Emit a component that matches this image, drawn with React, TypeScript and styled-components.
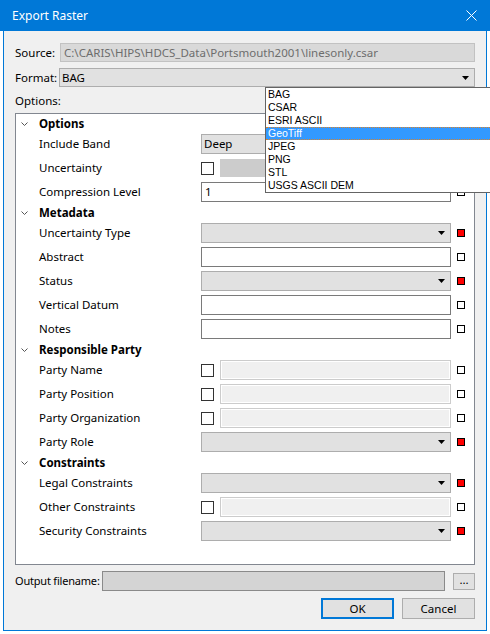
import React from "react";
import styled, { createGlobalStyle } from "styled-components";

const GlobalStyle = createGlobalStyle`
    html, body {
        margin: 0;
        padding: 0;
        background: #ffffff;
        overflow: hidden;
    }
    body {
        font-family: "Segoe UI", "Noto Sans", "Liberation Sans", sans-serif;
        font-size: 11.5px;
        color: #000;
    }
`

const Window = styled.div`
    width: 490px;
    height: 634px;
    display: flex;
    flex-direction: column;
`

const TitleBar = styled.div`
    height: 31px;
    background: #0078d7;
    display: flex;
    align-items: center;
    justify-content: space-between;
    padding: 0 13px 0 12px;
    box-sizing: border-box;
    flex-shrink: 0;
`

const TitleText = styled.span`
    color: #fff;
    font-size: 12px;
`

const CloseBtn = styled.div`
    width: 12px;
    height: 12px;
    display: flex;
    align-items: center;
    justify-content: center;
`

const Body = styled.div`
    margin: 0 3px;
    width: 484px;
    height: 600px;
    box-sizing: border-box;
    background: #f0f0f0;
    border: 1px solid #0078d7;
    border-top: none;
    padding: 12px 11px 11px 11px;
    display: flex;
    flex-direction: column;
`

const FormRow = styled.div<{ $gap?: number }>`
    display: flex;
    align-items: center;
    height: 19px;
    margin-bottom: ${p => p.$gap ?? 0}px;
`

const FormLabel = styled.span`
    width: 45px;
    flex-shrink: 0;
    line-height: 16px;
`

const SourceInput = styled.div`
    flex: 1;
    height: 19px;
    box-sizing: border-box;
    background: #d9d9d9;
    border: 1px solid #c2c2c2;
    color: #6d6d6d;
    padding-left: 3px;
    line-height: 17px;
    white-space: nowrap;
    overflow: hidden;
`

const ComboWrap = styled.div`
    position: relative;
    flex: 1;
    height: 19px;
    margin-left: -1px;
`

const Combo = styled.div<{ $height?: number }>`
    width: 100%;
    height: ${p => p.$height ?? 20}px;
    box-sizing: border-box;
    background: #e1e1e1;
    border: 1px solid #adadad;
    display: flex;
    align-items: center;
    justify-content: space-between;
    padding: 0 5px 0 2px;
    line-height: 16px;
`

const Arrow = () => (
    <svg width="7" height="4" viewBox="0 0 7 4">
        <polygon points="0,0 7,0 3.5,4" fill="#000" />
    </svg>
)

const DropList = styled.div`
    position: absolute;
    top: 100%;
    left: 206px;
    width: 232px;
    box-sizing: border-box;
    background: #fff;
    border: 1px solid #646464;
    font-family: "Liberation Sans", Arial, sans-serif;
    font-size: 10.5px;
    z-index: 10;
`

const DropItem = styled.div<{ $active?: boolean }>`
    height: 13px;
    box-sizing: border-box;
    padding-left: 2px;
    background: ${p => (p.$active ? "#3399ff" : "#fff")};
    color: ${p => (p.$active ? "#fff" : "#000")};
    border-top: 1px dotted ${p => (p.$active ? "#d9822b" : "transparent")};
    border-bottom: 1px dotted ${p => (p.$active ? "#d9822b" : "transparent")};
    line-height: 11px;
`

const OptionsLabel = styled.div`
    margin-top: 6px;
    line-height: 16px;
    height: 16px;
`

const Tree = styled.div`
    margin-top: 4px;
    height: 452px;
    box-sizing: border-box;
    background: #fff;
    border: 1px solid #828790;
    padding-top: 1px;
    display: flex;
    flex-direction: column;
    flex-shrink: 0;
`

const HeaderRow = styled.div`
    height: 17px;
    display: flex;
    align-items: center;
    padding-left: 5px;
`

const Chevron = styled.div`
    width: 18px;
    display: flex;
    align-items: center;
`

const HeaderText = styled.span`
    font-weight: 700;
    line-height: 16px;
`

const FieldRow = styled.div`
    height: 24px;
    display: flex;
    align-items: center;
    padding-left: 23px;
`

const FieldLabel = styled.span`
    width: 162px;
    flex-shrink: 0;
    line-height: 16px;
    white-space: nowrap;
`

const Widget = styled.div`
    width: 250px;
    display: flex;
    align-items: center;
    flex-shrink: 0;
`

const TextInput = styled.div`
    width: 100%;
    height: 20px;
    box-sizing: border-box;
    background: #fff;
    color: #000;
    border: 1px solid #7a7a7a;
    padding-left: 3px;
    line-height: 18px;
`

const CheckBox = styled.div`
    width: 13px;
    height: 13px;
    box-sizing: border-box;
    border: 1px solid #333;
    background: #fff;
    flex-shrink: 0;
    margin-right: 6px;
`

const DisabledInput = styled.div`
    flex: 1;
    height: 20px;
    box-sizing: border-box;
    background: #f0f0f0;
    border: 1px solid #cccccc;
    box-shadow: inset 0 0 0 1px #fff;
`

const GrayBox = styled.div`
    flex: 1;
    height: 18px;
    background: #cccccc;
`

const Marker = styled.div<{ $required?: boolean }>`
    width: 8px;
    height: 8px;
    box-sizing: border-box;
    margin-left: 6px;
    border: 1px solid #000;
    background: ${p => (p.$required ? "#ff0000" : "#fff")};
`

const OutputRow = styled.div`
    margin-top: 6px;
    height: 20px;
    display: flex;
    align-items: center;
`

const OutputLabel = styled.span`
    width: 87px;
    flex-shrink: 0;
    font-size: 11px;
    letter-spacing: -0.2px;
    line-height: 16px;
    white-space: nowrap;
`

const OutputInput = styled.div`
    flex: 1;
    height: 20px;
    box-sizing: border-box;
    background: #d4d4d4;
    border: 1px solid #8a8a8a;
`

const BrowseButton = styled.div`
    margin-left: 8px;
    width: 22px;
    height: 17px;
    box-sizing: border-box;
    background: #e1e1e1;
    border: 1px solid #adadad;
    display: flex;
    align-items: center;
    justify-content: center;
    line-height: 12px;
    padding-bottom: 2px;
    flex-shrink: 0;
`

const ButtonRow = styled.div`
    margin-top: 7px;
    display: flex;
    justify-content: flex-end;
    gap: 8px;
`

const Button = styled.div<{ $default?: boolean }>`
    width: 73px;
    height: 21px;
    box-sizing: border-box;
    background: #e1e1e1;
    border: ${p => (p.$default ? "2px solid #0078d7" : "1px solid #adadad")};
    display: flex;
    align-items: center;
    justify-content: center;
    line-height: 16px;
`

type Field = {
    label: string;
    kind: "combo" | "input" | "check" | "checkgray";
    value?: string;
    required?: boolean;
};

type Group = { title: string; fields: Field[] };

const groups: Group[] = [
    {
        title: "Options",
        fields: [
            { label: "Include Band", kind: "combo", value: "Deep", required: true },
            { label: "Uncertainty", kind: "checkgray", required: true },
            { label: "Compression Level", kind: "input", value: "1" },
        ],
    },
    {
        title: "Metadata",
        fields: [
            { label: "Uncertainty Type", kind: "combo", required: true },
            { label: "Abstract", kind: "input" },
            { label: "Status", kind: "combo", required: true },
            { label: "Vertical Datum", kind: "input" },
            { label: "Notes", kind: "input" },
        ],
    },
    {
        title: "Responsible Party",
        fields: [
            { label: "Party Name", kind: "check" },
            { label: "Party Position", kind: "check" },
            { label: "Party Organization", kind: "check" },
            { label: "Party Role", kind: "combo", required: true },
        ],
    },
    {
        title: "Constraints",
        fields: [
            { label: "Legal Constraints", kind: "combo", required: true },
            { label: "Other Constraints", kind: "check" },
            { label: "Security Constraints", kind: "combo", required: true },
        ],
    },
];

const formats = ["BAG", "CSAR", "ESRI ASCII", "GeoTiff", "JPEG", "PNG", "STL", "USGS ASCII DEM"];

const renderWidget = (f: Field) => {
    switch (f.kind) {
        case "combo":
            return (
                <Combo>
                    <span>{f.value ?? ""}</span>
                    <Arrow />
                </Combo>
            );
        case "input":
            return <TextInput>{f.value ?? ""}</TextInput>;
        case "check":
            return (
                <>
                    <CheckBox />
                    <DisabledInput />
                </>
            );
        case "checkgray":
            return (
                <>
                    <CheckBox />
                    <GrayBox />
                </>
            );
    }
};

export default function App() {
    return (
        <>
            <GlobalStyle />
            <Window>
                <TitleBar>
                    <TitleText>Export Raster</TitleText>
                    <CloseBtn>
                        <svg width="11" height="11" viewBox="0 0 11 11">
                            <path d="M0.5 0.5 L10.5 10.5 M10.5 0.5 L0.5 10.5" stroke="#fff" strokeWidth="1" />
                        </svg>
                    </CloseBtn>
                </TitleBar>
                <Body>
                    <FormRow $gap={6}>
                        <FormLabel>Source:</FormLabel>
                        <SourceInput>C:\CARIS\HIPS\HDCS_Data\Portsmouth2001\linesonly.csar</SourceInput>
                    </FormRow>
                    <FormRow>
                        <FormLabel>Format:</FormLabel>
                        <ComboWrap>
                            <Combo $height={19}>
                                <span>BAG</span>
                                <Arrow />
                            </Combo>
                            <DropList>
                                {formats.map(f => (
                                    <DropItem key={f} $active={f === "GeoTiff"}>
                                        {f}
                                    </DropItem>
                                ))}
                            </DropList>
                        </ComboWrap>
                    </FormRow>
                    <OptionsLabel>Options:</OptionsLabel>
                    <Tree>
                        {groups.map(g => (
                            <React.Fragment key={g.title}>
                                <HeaderRow>
                                    <Chevron>
                                        <svg width="7" height="4" viewBox="0 0 7 4">
                                            <polyline points="0.5,0.5 3.5,3.5 6.5,0.5" fill="none" stroke="#555" strokeWidth="1" />
                                        </svg>
                                    </Chevron>
                                    <HeaderText>{g.title}</HeaderText>
                                </HeaderRow>
                                {g.fields.map(f => (
                                    <FieldRow key={f.label}>
                                        <FieldLabel>{f.label}</FieldLabel>
                                        <Widget>{renderWidget(f)}</Widget>
                                        <Marker $required={f.required} />
                                    </FieldRow>
                                ))}
                            </React.Fragment>
                        ))}
                    </Tree>
                    <OutputRow>
                        <OutputLabel>Output filename:</OutputLabel>
                        <OutputInput />
                        <BrowseButton>...</BrowseButton>
                    </OutputRow>
                    <ButtonRow>
                        <Button $default>OK</Button>
                        <Button>Cancel</Button>
                    </ButtonRow>
                </Body>
            </Window>
        </>
    );
}
